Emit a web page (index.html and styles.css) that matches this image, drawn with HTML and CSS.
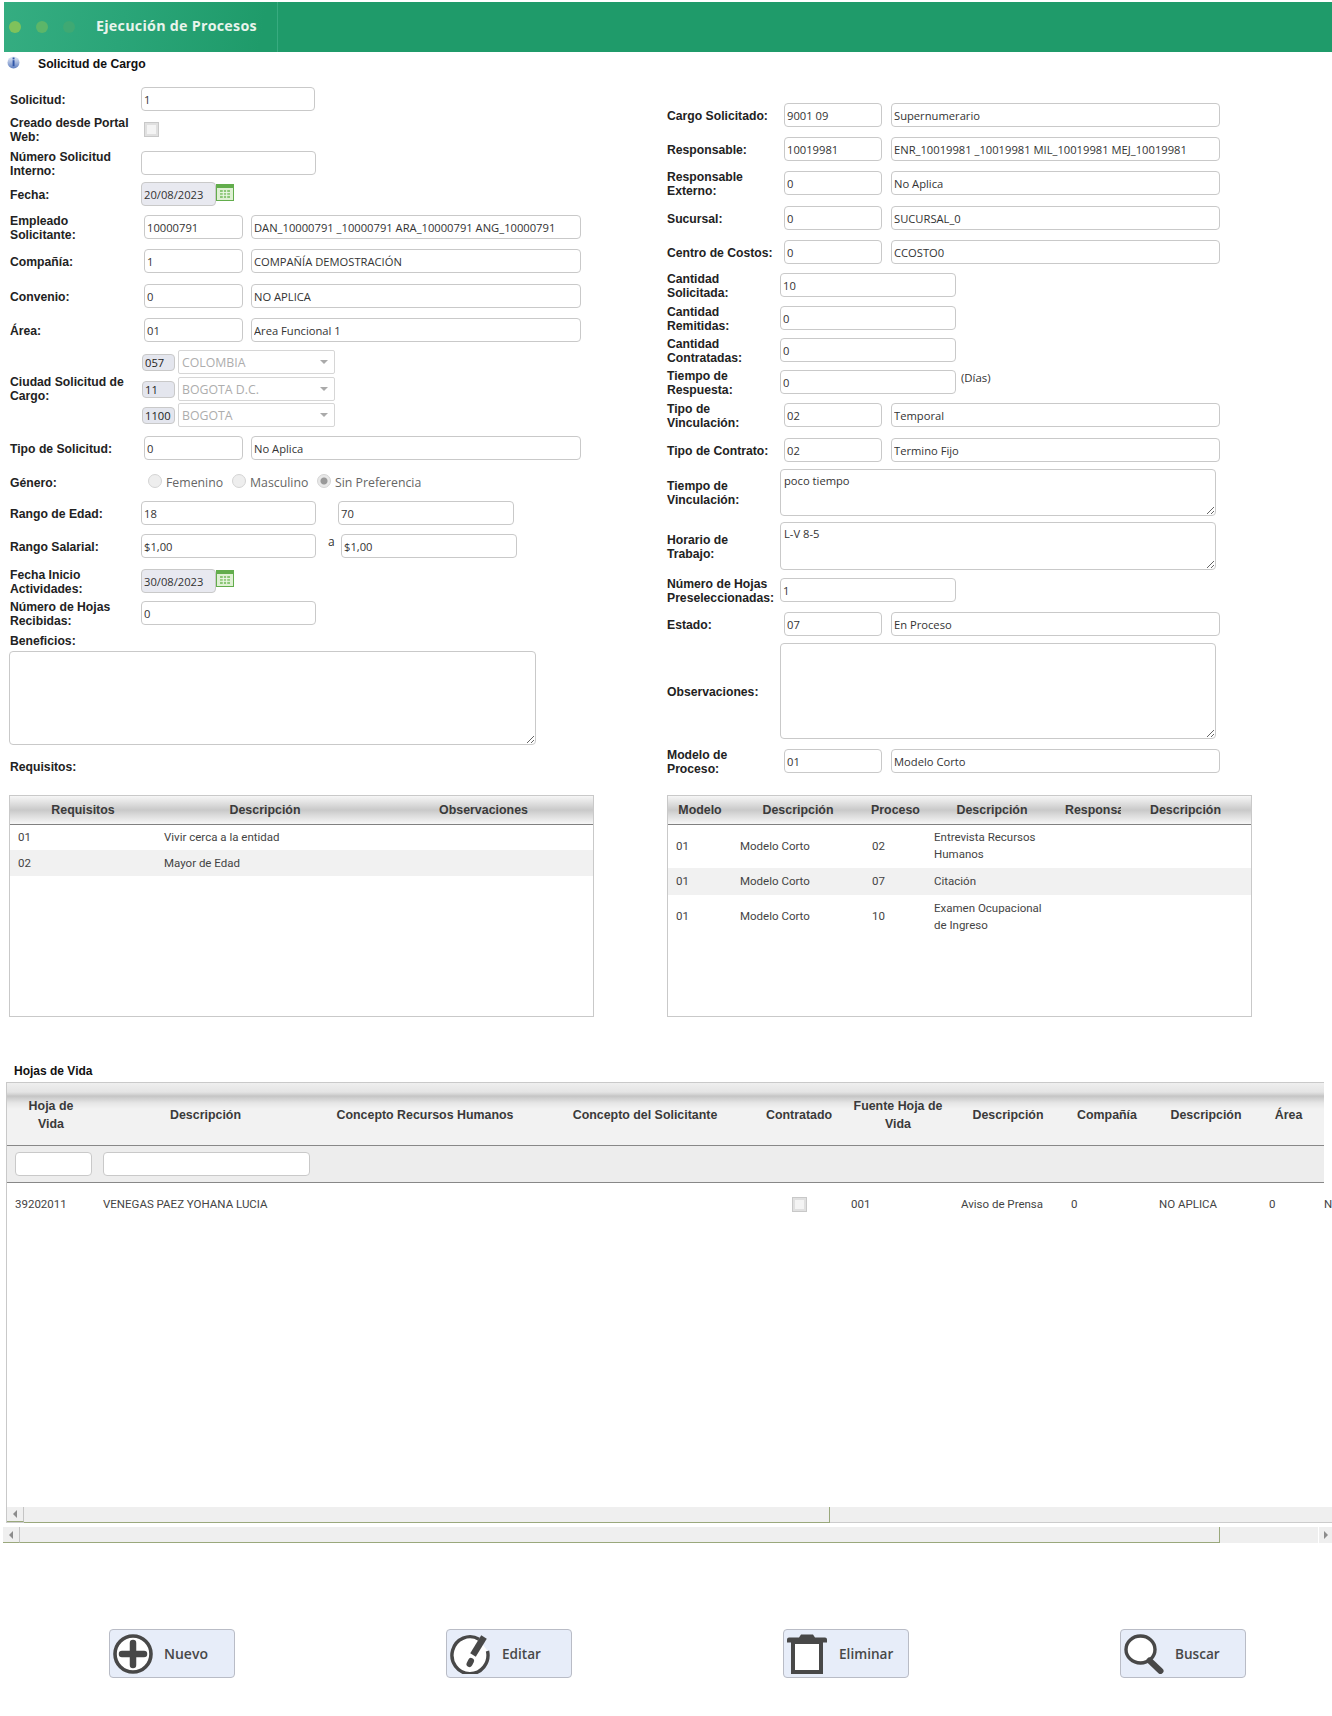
FILE: index.html
```html
<!DOCTYPE html>
<html lang="es">
<head>
<meta charset="utf-8">
<title>Ejecución de Procesos</title>
<link rel="stylesheet" href="styles.css">
</head>
<body>
<header class="top">
  <span class="dot d1"></span><span class="dot d2"></span><span class="dot d3"></span>
  <h1 class="top-title">Ejecución de Procesos</h1>
  <span class="top-div"></span>
</header>
<div class="sub">
  <svg class="info" viewBox="0 0 13 13"><defs><linearGradient id="ig" x1="0" y1="0" x2="0" y2="1"><stop offset="0" stop-color="#e6ecf8"/><stop offset="1" stop-color="#5f7fc0"/></linearGradient></defs><circle cx="6.5" cy="6.5" r="6" fill="url(#ig)"/><rect x="5.6" y="1.5" width="1.9" height="1.9" fill="#2f55a8"/><rect x="5.6" y="4.2" width="1.9" height="6" fill="#2f55a8"/></svg>
  <span class="sub-text">Solicitud de Cargo</span>
</div>
<main class="cols">
  <section class="col-l">
    <div class="row"><label class="lbl">Solicitud:</label><input class="in w174" value="1"></div>
    <div class="row g6"><label class="lbl">Creado desde Portal Web:</label><input type="checkbox" class="chk ck-portal" disabled></div>
    <div class="row g10"><label class="lbl">Número Solicitud Interno:</label><input class="in w175" value=""></div>
    <div class="row g7"><label class="lbl">Fecha:</label><input class="in dis w75" value="20/08/2023"><svg class="cal" viewBox="0 0 18 17"><rect x=".5" y=".5" width="17" height="16" fill="#dff0d4" stroke="#62ad4c"/><rect x="1" y="1" width="16" height="3" fill="#62ad4c"/><path d="M4 6h10v8H4z" fill="#8cc777"/><path d="M7.3 6v8M10.7 6v8M4 8.6h10M4 11.3h10" stroke="#eef8e8"/></svg></div>
    <div class="row g9"><label class="lbl lbl-c">Empleado Solicitante:</label><input class="in code" value="10000791"><input class="in desc" value="DAN_10000791 _10000791 ARA_10000791 ANG_10000791"></div>
    <div class="row g10"><label class="lbl lbl-c">Compañía:</label><input class="in code" value="1"><input class="in desc" value="COMPAÑÍA DEMOSTRACIÓN"></div>
    <div class="row g11"><label class="lbl lbl-c">Convenio:</label><input class="in code" value="0"><input class="in desc" value="NO APLICA"></div>
    <div class="row g10"><label class="lbl lbl-c">Área:</label><input class="in code" value="01"><input class="in desc" value="Area Funcional 1"></div>
    <div class="row row-city g8">
      <label class="lbl">Ciudad Solicitud de Cargo:</label>
      <div class="city">
        <div class="city-row"><span class="tag">057</span><span class="sel">COLOMBIA</span></div>
        <div class="city-row g3"><span class="tag">11</span><span class="sel">BOGOTA D.C.</span></div>
        <div class="city-row g2"><span class="tag">1100</span><span class="sel">BOGOTA</span></div>
      </div>
    </div>
    <div class="row g9"><label class="lbl lbl-c">Tipo de Solicitud:</label><input class="in code" value="0"><input class="in desc" value="No Aplica"></div>
    <div class="row g10"><label class="lbl">Género:</label>
      <div class="radios">
        <input type="radio" class="rad" name="g" disabled><span class="rad-t t1">Femenino</span>
        <input type="radio" class="rad" name="g" disabled><span class="rad-t t2">Masculino</span>
        <input type="radio" class="rad" name="g" disabled checked><span class="rad-t">Sin Preferencia</span>
      </div>
    </div>
    <div class="row g7"><label class="lbl">Rango de Edad:</label><input class="in w175" value="18"><input class="in w176 ml22" value="70"></div>
    <div class="row g9"><label class="lbl">Rango Salarial:</label><input class="in w175" value="$1,00"><span class="a-sep">a</span><input class="in w176" value="$1,00"></div>
    <div class="row g11"><label class="lbl">Fecha Inicio Actividades:</label><input class="in dis w75" value="30/08/2023"><svg class="cal cal-up" viewBox="0 0 18 17"><rect x=".5" y=".5" width="17" height="16" fill="#dff0d4" stroke="#62ad4c"/><rect x="1" y="1" width="16" height="3" fill="#62ad4c"/><path d="M4 6h10v8H4z" fill="#8cc777"/><path d="M7.3 6v8M10.7 6v8M4 8.6h10M4 11.3h10" stroke="#eef8e8"/></svg></div>
    <div class="row g8"><label class="lbl">Número de Hojas Recibidas:</label><input class="in w175" value="0"></div>
    <div class="lbl-solo g9">Beneficios:</div>
    <textarea class="ta ta-ben g3"></textarea>
    <div class="lbl-solo g15">Requisitos:</div>
    <div class="tbl-box tbl-l g21">
      <table class="tbl">
        <thead><tr><th class="lc1">Requisitos</th><th class="lc2">Descripción</th><th>Observaciones</th></tr></thead>
        <tbody>
          <tr><td>01</td><td>Vivir cerca a la entidad</td><td></td></tr>
          <tr class="alt"><td>02</td><td>Mayor de Edad</td><td></td></tr>
        </tbody>
      </table>
    </div>
  </section>
  <section class="col-r">
    <div class="row"><label class="lbl lbl-r">Cargo Solicitado:</label><input class="in rcode" value="9001 09"><input class="in rdesc" value="Supernumerario"></div>
    <div class="row g10"><label class="lbl lbl-r">Responsable:</label><input class="in rcode" value="10019981"><input class="in rdesc" value="ENR_10019981 _10019981 MIL_10019981 MEJ_10019981"></div>
    <div class="row g10"><label class="lbl lbl-r">Responsable Externo:</label><input class="in rcode" value="0"><input class="in rdesc" value="No Aplica"></div>
    <div class="row g11"><label class="lbl lbl-r">Sucursal:</label><input class="in rcode" value="0"><input class="in rdesc" value="SUCURSAL_0"></div>
    <div class="row g10"><label class="lbl lbl-r">Centro de Costos:</label><input class="in rcode" value="0"><input class="in rdesc" value="CCOSTO0"></div>
    <div class="row g9"><label class="lbl lbl-r">Cantidad Solicitada:</label><input class="in w176" value="10"></div>
    <div class="row g9"><label class="lbl lbl-r">Cantidad Remitidas:</label><input class="in w176" value="0"></div>
    <div class="row g8"><label class="lbl lbl-r">Cantidad Contratadas:</label><input class="in w176" value="0"></div>
    <div class="row g8"><label class="lbl lbl-r">Tiempo de Respuesta:</label><input class="in w176" value="0"><span class="dias">(Días)</span></div>
    <div class="row g9"><label class="lbl lbl-r">Tipo de Vinculación:</label><input class="in rcode" value="02"><input class="in rdesc" value="Temporal"></div>
    <div class="row g11"><label class="lbl lbl-r">Tipo de Contrato:</label><input class="in rcode" value="02"><input class="in rdesc" value="Termino Fijo"></div>
    <div class="row row-auto g7"><label class="lbl lbl-r">Tiempo de Vinculación:</label><textarea class="ta ta-r h47">poco tiempo</textarea></div>
    <div class="row row-auto g6"><label class="lbl lbl-r">Horario de Trabajo:</label><textarea class="ta ta-r h48">L-V 8-5</textarea></div>
    <div class="row g8"><label class="lbl lbl-r">Número de Hojas Preseleccionadas:</label><input class="in w176" value="1"></div>
    <div class="row g10"><label class="lbl lbl-r">Estado:</label><input class="in rcode" value="07"><input class="in rdesc" value="En Proceso"></div>
    <div class="row row-auto g7"><label class="lbl lbl-r">Observaciones:</label><textarea class="ta ta-r h96"></textarea></div>
    <div class="row g10"><label class="lbl lbl-r">Modelo de Proceso:</label><input class="in rcode" value="01"><input class="in rdesc" value="Modelo Corto"></div>
    <div class="tbl-box tbl-r g22">
      <table class="tbl">
        <thead><tr><th class="rc1">Modelo</th><th class="rc2">Descripción</th><th class="rc3">Proceso</th><th class="rc4">Descripción</th><th class="rc5"><div class="clip">Responsable</div></th><th class="rc6">Descripción</th></tr></thead>
        <tbody>
          <tr><td>01</td><td>Modelo Corto</td><td>02</td><td class="wrap">Entrevista Recursos Humanos</td><td></td><td></td></tr>
          <tr class="alt"><td>01</td><td>Modelo Corto</td><td>07</td><td class="wrap">Citación</td><td></td><td></td></tr>
          <tr><td>01</td><td>Modelo Corto</td><td>10</td><td class="wrap">Examen Ocupacional de Ingreso</td><td></td><td></td></tr>
        </tbody>
      </table>
    </div>
  </section>
</main>
<div class="hv-title">Hojas de Vida</div>
<section class="hv">
  <div class="hv-head hv-grid">
    <div>Hoja de Vida</div><div>Descripción</div><div>Concepto Recursos Humanos</div><div>Concepto del Solicitante</div><div>Contratado</div><div>Fuente Hoja de Vida</div><div>Descripción</div><div>Compañía</div><div>Descripción</div><div>Área</div>
  </div>
  <div class="hv-filter hv-grid">
    <div><input class="in f1"></div><div><input class="in f2"></div>
  </div>
  <div class="hv-body">
    <div class="hv-row hv-grid">
      <div>39202011</div><div>VENEGAS PAEZ YOHANA LUCIA</div><div></div><div></div><div class="c"><input type="checkbox" class="chk" disabled></div><div>001</div><div>Aviso de Prensa</div><div>0</div><div>NO APLICA</div><div>0</div><div>NO APLICA</div>
    </div>
  </div>
  <div class="sb sb-in"><span class="sb-btn"><i class="arr-l"></i></span><span class="sb-thumb th-in"></span></div>
</section>
<div class="sb sb-out"><span class="sb-btn"><i class="arr-l"></i></span><span class="sb-thumb th-out"></span><span class="sb-btn-r"><i class="arr-r"></i></span></div>
<nav class="btns">
  <button class="btn" type="button"><svg class="ico" viewBox="0 0 40 40"><circle cx="20" cy="20" r="18" fill="#fff" stroke="#484848" stroke-width="3.6"/><path d="M20 9v22M9 20h22" stroke="#484848" stroke-width="6.5" stroke-linecap="round"/></svg><span class="btn-t">Nuevo</span></button>
  <button class="btn" type="button"><svg class="ico" viewBox="0 0 40 40"><path d="M29 5.2A18 18.5 0 1 0 37.5 17" fill="#fff" stroke="#484848" stroke-width="3.4"/><path d="M23 21L34 3" stroke="#484848" stroke-width="6.5" stroke-linecap="butt"/><path d="M19.5 30l1.5-3" stroke="#484848" stroke-width="6" stroke-linecap="round"/></svg><span class="btn-t t-wide">Editar</span></button>
  <button class="btn" type="button"><svg class="ico" viewBox="0 0 40 40"><rect x="6" y="8" width="28" height="30" fill="#fff" stroke="#484848" stroke-width="4"/><path d="M2 3.5h36a2 2 0 0 1 2 2V8.5H0V5.5a2 2 0 0 1 2-2z M14 0.500h12l2 3H12z" fill="#484848"/></svg><span class="btn-t t-wide">Eliminar</span></button>
  <button class="btn" type="button"><svg class="ico" viewBox="0 0 40 40"><ellipse cx="16.500" cy="15.500" rx="14.500" ry="13.500" fill="#fff" stroke="#484848" stroke-width="3.4"/><path d="M25.500 26.500L36.500 37" stroke="#484848" stroke-width="6" stroke-linecap="round"/></svg><span class="btn-t t-buscar">Buscar</span></button>
</nav>
</body>
</html>
```
FILE: styles.css
```css
* { box-sizing: border-box; }
html, body { margin: 0; padding: 0; }
body {
  width: 1332px;
  height: 1716px;
  overflow: hidden;
  background: #fff;
  font-family: "Liberation Sans", Arial, sans-serif;
  font-size: 12px;
  color: #222;
}

/* Top bar */
.top {
  display: flex;
  align-items: center;
  height: 50px;
  margin: 2px 0 0 4px;
  padding-left: 5px;
  background: linear-gradient(100deg, #35ad81 0, #2aa578 120px, #1f9b6a 260px, #1f9b6a 100%);
}
.dot { width: 12px; height: 12px; border-radius: 50%; margin-right: 15px; filter: blur(.6px); }
.d1 { background: #7fc25b; }
.d2 { background: #5cb669; }
.d3 { background: #3fa973; }
.top-title {
  margin: -4px 0 0 6px;
  width: 181px;
  font: 700 14.3px "Open Sans", sans-serif;
  letter-spacing: .25px;
  color: #e8f4ec;
}
.top-div { width: 1px; height: 50px; background: #38ab80; }

.sub { display: flex; align-items: center; height: 24px; padding-left: 7px; }
.info { width: 13px; height: 13px; margin-top: -4px; }
.sub-text { margin-left: 18px; font-weight: 700; font-size: 12.2px; color: #111; }

/* Form layout */
.cols { display: grid; grid-template-columns: 667px 665px; }
.col-l { padding: 11px 0 0 9px; width: 667px; }
.col-r { padding-top: 27px; }

.row { display: flex; align-items: center; height: 24px; }
.row-auto, .row-city { height: auto; }
.lbl { width: 132px; flex: none; padding-top: 1px; font-weight: 700; font-size: 12.2px; line-height: 14px; color: #222; }
.col-l .lbl { padding-left: 1px; padding-right: 12px; }
.col-l .lbl-c { width: 135px; padding-right: 15px; }
.lbl-r { width: 113px; padding-right: 5px; }
.lbl-solo { height: 14px; padding-left: 1px; line-height: 14px; font-weight: 700; font-size: 12.2px; color: #222; }

.g2 { margin-top: 2px; } .g3 { margin-top: 3px; } .g6 { margin-top: 6px; } .g7 { margin-top: 7px; }
.g8 { margin-top: 8px; } .g9 { margin-top: 9px; } .g10 { margin-top: 10px; } .g11 { margin-top: 11px; }
.g15 { margin-top: 15px; } .g21 { margin-top: 21px; } .g22 { margin-top: 22px; }

/* Inputs */
.in, .ta, .dias, .rad-t, .a-sep, .tag { font-family: "Open Sans", sans-serif; font-size: 11.2px; color: #333; }
.in {
  height: 24px;
  flex: none;
  padding: 0 2px;
  border: 1px solid #c9c9c9;
  border-radius: 4px;
  background: #fff;
  outline: none;
}
.w176 { width: 176px; }
.w175 { width: 175px; }
.w174 { width: 174px; }
.w75 { width: 75px; }
.dis { background: #e8e9f0; }
.ml22 { margin-left: 22px; }
.code { width: 99px; }
.desc { width: 330px; margin-left: 8px; }
.rcode { width: 98px; margin-left: 4px; }
.rdesc { width: 329px; margin-left: 9px; }
.a-sep { margin: -9px 8px 0 12px; width: 5px; font-size: 12px; }
.dias { margin: -9px 0 0 5px; font-size: 11.4px; }

.chk {
  appearance: none;
  width: 15px;
  height: 15px;
  margin: 0;
  border: 1px solid #c8c8c8;
  background: #f4f4f4;
  box-shadow: inset 0 0 0 2px #e0e0e0;
}
.ck-portal { margin-left: 3px; }

.cal { width: 18px; height: 17px; flex: none; margin-top: -3px; }
.cal-up { margin-top: -5px; }

/* City */
.city { display: flex; flex-direction: column; }
.city-row { display: flex; align-items: center; height: 24px; }
.tag {
  width: 33px;
  height: 17px;
  margin-left: 1px;
  padding-left: 2px;
  line-height: 15px;
  border: 1px solid #c9c9c9;
  border-radius: 4px;
  background: #e4e6ee;
  color: #222;
}
.sel {
  position: relative;
  display: block;
  width: 157px;
  height: 24px;
  margin-left: 3px;
  padding-left: 3px;
  line-height: 23px;
  border: 1px solid #d6d6d6;
  border-radius: 2px;
  font-family: "Open Sans", sans-serif;
  font-size: 12.3px;
  color: #adadad;
}
.sel::after {
  content: "";
  position: absolute;
  right: 6px;
  top: 9px;
  border: 4px solid transparent;
  border-top: 4px solid #aaa;
}

/* Radios */
.radios { display: flex; align-items: center; padding-left: 7px; }
.rad {
  appearance: none;
  width: 14px;
  height: 14px;
  margin: -3px 0 0;
  border: 1px solid #d4d4d4;
  border-radius: 50%;
  background: #eee;
}
.rad:checked { background: radial-gradient(circle, #999 0, #999 3px, #e8e8e8 4px); }
.rad-t { margin-left: 4px; font-size: 12.3px; color: #666; }
.t1 { margin-right: 9px; width: 57px; }
.t2 { margin-right: 9px; width: 58px; }

/* Textareas */
.ta {
  display: block;
  padding: 3px;
  border: 1px solid #c9c9c9;
  border-radius: 4px;
  outline: none;
  background: #fff;
}
.ta-ben { width: 527px; height: 94px; }
.ta-r { width: 436px; }
.h47 { height: 47px; } .h48 { height: 48px; } .h96 { height: 96px; }

/* Small tables */
.tbl-box {
  height: 222px;
  border: 1px solid #c9c9c9;
  overflow: hidden;
}
.tbl-l { width: 585px; }
.tbl-r { width: 585px; }
.tbl { width: 100%; border-collapse: collapse; table-layout: fixed; color: #444; font-family: Roboto, sans-serif; font-size: 11.5px; }
.tbl th {
  height: 28px;
  padding: 0 7px;
  font-family: "Liberation Sans", Arial, sans-serif;
  font-size: 12.4px;
  font-weight: 700;
  color: #3a3a3a;
  text-align: center;
  white-space: nowrap;
  border-bottom: 1px solid #808080;
  background: linear-gradient(#f6f6f6 0, #e0e0e0 25%, #c9c9c9 50%, #dedede 72%, #f7f7f7 100%);
}
.tbl td { height: 26px; padding: 0 8px; line-height: 18px; white-space: nowrap; }
.tbl td.wrap { white-space: normal; }
.tbl-r .tbl td { height: 27px; line-height: 17.500px; }
.tbl-r tbody tr:nth-child(odd) td { height: 44px; }
.alt td { background: #f1f1f1; }
.lc1 { width: 146px; }
.lc2 { width: 218px; }
.rc1 { width: 64px; }
.rc2 { width: 132px; }
.rc3 { width: 62px; }
.rc4 { width: 132px; }
.rc5 { width: 70px; }
.tbl th.rc6 { padding-right: 15px; }
.clip { overflow: hidden; width: 56px; text-align: left; }

/* Hojas de vida */
.hv-title {
  height: 14px;
  margin: 47px 0 4px 14px;
  line-height: 14px;
  font-weight: 700;
  color: #111;
}
.hv { width: 1332px; margin-left: 6px; border-left: 1px solid #c9c9c9; overflow: hidden; }
.hv-grid {
  display: grid;
  grid-template-columns: 88px 221px 218px 222px 86px 112px 108px 90px 108px 57px 100px;
}
.hv-head {
  width: 1317px;
  height: 64px;
  border-top: 1px solid #c9c9c9;
  border-bottom: 1px solid #888;
  background: linear-gradient(#efefef 0, #e4e4e4 9px, #cfcfcf 12px, #c4c4c4 13px, #e6e6e6 20px, #f2f2f2 26px, #f2f2f2 100%);
  font-size: 12.4px;
  font-weight: 700;
  color: #3a3a3a;
  line-height: 18px;
  text-align: center;
}
.hv-head > div { align-self: center; padding: 1px 10px 0; }
.hv-filter {
  width: 1317px;
  height: 37px;
  border-bottom: 1px solid #888;
  background: #ededed;
  align-items: center;
}
.f1 { width: 77px; margin-left: 8px; }
.f2 { width: 207px; margin-left: 8px; }
.hv-body { height: 324px; }
.hv-row { width: 1426px; height: 42px; align-items: center; color: #444; white-space: nowrap; font-family: Roboto, sans-serif; font-size: 11.5px; }
.hv-row > div { padding-left: 8px; }
.hv-row > div:nth-child(n+6):nth-child(even) { padding-left: 9px; }
.hv-row > div:nth-child(n+7):nth-child(odd) { padding-left: 7px; }
.hv-row > .c { padding-left: 36px; display: flex; }

/* Scrollbars */
.sb { display: flex; height: 16px; background: #efefef; }
.sb-in { border-bottom: 1px solid #ccc; }
.sb-out { width: 1329px; margin: 4px 0 0 3px; }
.sb-btn { width: 17px; flex: none; display: flex; align-items: center; justify-content: center; border-right: 1px solid #c4c4c4; border-bottom: 1px solid #9aa87c; }
.sb-btn-r { width: 14px; margin-left: auto; flex: none; display: flex; align-items: center; padding-left: 5px; border-left: 1px solid #fff; }
.arr-l { border: 4px solid transparent; border-left-width: 0; border-right: 4px solid #8c8c8c; }
.arr-r { border: 4px solid transparent; border-right-width: 0; border-left: 4px solid #8c8c8c; }
.sb-thumb { display: block; flex: none; height: 16px; border-right: 1px solid #9aa87c; border-bottom: 1px solid #9aa87c; }
.th-in { width: 806px; }
.th-out { width: 1200px; }

/* Buttons */
.btns { display: flex; gap: 211px; margin: 86px 0 0 109px; }
.btn {
  display: flex;
  align-items: center;
  width: 126px;
  height: 49px;
  padding: 0 0 0 3px;
  border: 1px solid #b9bcc6;
  border-radius: 4px;
  background: #e7edf9;
}
.ico { width: 40px; height: 40px; flex: none; }
.btn-t { margin-left: 11px; margin-top: -1px; font: 600 14px "Open Sans", sans-serif; color: #484848; }
.t-wide { margin-left: 12px; font-size: 13.6px; }
.t-buscar { font-size: 13.6px; }
```
